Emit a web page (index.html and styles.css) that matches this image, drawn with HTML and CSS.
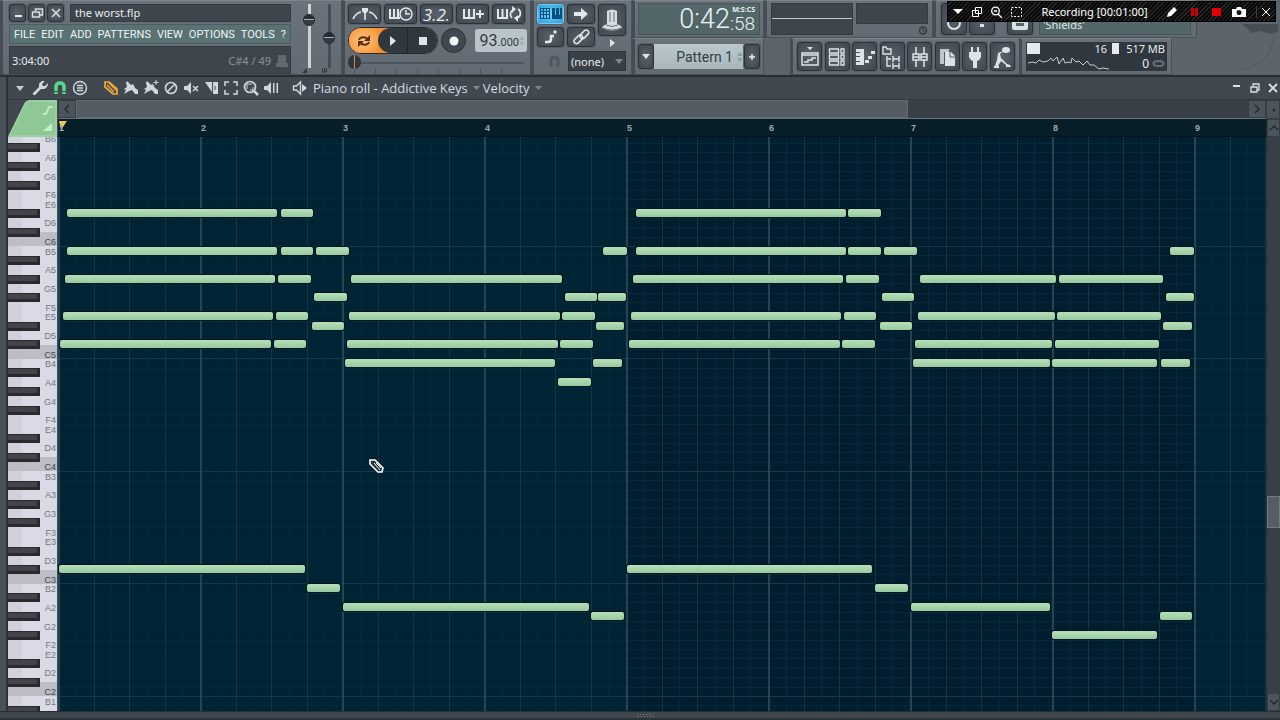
FILE: index.html
```html
<!DOCTYPE html>
<html lang="en">
<head>
<meta charset="utf-8">
<title>the worst.flp</title>
<link rel="stylesheet" href="styles.css">
</head>
<body>
<div class="app">
<header class="toolbar">
  <section class="panel file-panel">
    <div class="file-main">
      <div class="title-row">
        <button class="btn win" aria-label="Minimize"><svg width="16" height="16"><path d="M5 11h7" stroke="#e4ebef" stroke-width="2"/></svg></button>
        <button class="btn win" aria-label="Restore"><svg width="16" height="16" fill="none" stroke="#d5dde2"><path d="M6.500 6V4h7v6H11" stroke-width="1.500"/><path d="M3.500 7h7v5h-7z" stroke-width="1.500"/></svg></button>
        <button class="btn win" aria-label="Close"><svg width="16" height="16"><path d="M4 4l8 8M12 4l-8 8" stroke="#d5dde2" stroke-width="1.700"/></svg></button>
        <div class="sunk file-name">the worst.flp</div>
      </div>
      <nav class="menu">
        <button>FILE</button><button>EDIT</button><button>ADD</button><button>PATTERNS</button><button>VIEW</button><button>OPTIONS</button><button>TOOLS</button><button>?</button>
      </nav>
      <div class="sunk hint"><span>3:04:00</span><span class="hint-note">C#4 / 49</span><svg width="12" height="15" fill="#626a71"><path d="M2 2h8v8h2v4H0v-4h2z"/></svg></div>
    </div>
    <div class="fader"><input class="vol" type="range" value="80" aria-label="Main volume"><svg width="6" height="5"><path d="M0 5L5 0V5z" fill="#30363c"/></svg></div>
    <div class="fader"><input class="pitch" type="range" value="47" aria-label="Main pitch"><svg width="6" height="5"><path d="M.5 0V4h4V0M2.500 0v4" stroke="#30363c" fill="none"/></svg></div>
  </section>

  <section class="panel transport">
    <div class="btn-row">
      <button class="btn mode" aria-label="Metronome"><svg width="28" height="18" fill="none" stroke="#e2e9ed" stroke-width="1.600"><path d="M2 14q3-6 8-7M26 14q-3-6-8-7M14 15V5"/><path d="M11 3h6v3l-3 3-3-3z" fill="#e2e9ed" stroke="none"/></svg></button>
      <button class="btn mode" aria-label="Wait for input"><svg width="28" height="18" fill="none" stroke="#e2e9ed" stroke-width="2"><path d="M3 4v9h10M7 4v9M11 4v9"/><circle cx="19" cy="9" r="6" fill="#4d565e" stroke-width="1.500"/><path d="M19 5v4h4" stroke-width="1.500"/></svg></button>
      <button class="btn mode count" aria-label="Countdown">3.2.</button>
      <button class="btn mode" aria-label="Overdub"><svg width="28" height="18" fill="none" stroke="#e2e9ed" stroke-width="2"><path d="M5 4v9h10V4M10 4v9M17 9h8M21 5v8"/></svg></button>
      <button class="btn mode" aria-label="Loop recording"><svg width="28" height="18" fill="none" stroke="#e2e9ed" stroke-width="2"><path d="M3 4v9h9V4M7.500 4v9"/><path d="M17 13a5 5 0 0 1 1-8M23 4a5 5 0 0 1-1 9" stroke-width="1.700"/><path d="M17 1l4 3-4 4zM23 10l-4 3 4 4z" fill="#e2e9ed" stroke="none"/></svg></button>
    </div>
    <div class="play-row">
      <div class="pill">
        <button class="loop" aria-label="Song mode"><svg width="14" height="14" fill="none" stroke="#602b04" stroke-width="2"><path d="M2 6q1-4 8-2M12 8q-1 4-8 2"/><path d="M13 1v6H7zM1 13V7h6z" fill="#602b04" stroke="none"/></svg></button>
        <button class="play" aria-label="Play"><svg width="10" height="12"><path d="M2 1l6 5-6 5z" fill="#dfe6ea"/></svg></button>
        <button class="stop" aria-label="Stop"><svg width="8" height="8"><path d="M0 0h8v8H0z" fill="#dfe6ea"/></svg></button>
      </div>
      <button class="record" aria-label="Record"><svg width="10" height="10"><circle cx="5" cy="5" r="4.500" fill="#f3f6f8"/></svg></button>
      <label class="tempo"><span>93</span><small>.000</small><svg width="6" height="12" fill="#a2aeb4"><path d="M3 1l3 4H0zM3 11l3-4H0z"/></svg></label>
    </div>
    <input class="position" type="range" value="0" aria-label="Song position">
    <div class="ticks"></div>
  </section>

  <section class="panel record-panel">
    <div class="quad">
      <button class="btn active" aria-label="Typing keyboard"><svg width="24" height="14"><path d="M1 1.500h10M1 4.500h10M1 7.500h10M1 11.500h10M1.500 1v11M4.500 1v11M7.500 1v11M10.500 1v11" stroke="#084e78" fill="none"/><path d="M13 1h3v7h1V1h3v7h1V1h2v11H13z" fill="#084e78"/></svg></button>
      <button class="btn" aria-label="Step mode"><svg width="18" height="14"><path d="M2 5h7V1l7 6-7 6V9H2z" fill="#e2e9ed"/></svg></button>
      <button class="btn" aria-label="Slide"><svg width="18" height="16" fill="none" stroke="#e2e9ed" stroke-width="2.500"><path d="M3 13h3q3 0 3-3V7h3" /><circle cx="13" cy="3" r="1.700" fill="#e2e9ed" stroke="none"/></svg></button>
      <button class="btn" aria-label="Link controllers"><svg width="18" height="16" fill="none" stroke="#e2e9ed" stroke-width="1.500"><rect x="1" y="8" width="10" height="5" rx="2.500" transform="rotate(-45 6 10)"/><rect x="7" y="3" width="10" height="5" rx="2.500" transform="rotate(-45 12 5)"/></svg></button>
    </div>
    <div class="hat-col"><button class="btn hat" aria-label="Help hat"><svg width="22" height="24" fill="#d6dee2"><path d="M6 3q5-3 10 0v13q4 1 5 4-10 5-20 0 1-3 5-4z"/><path d="M9 4v10M13 4v10M5 17q6 3 12 0M2 20q9 4 18 0" stroke="#697179" fill="none"/></svg></button><svg width="6" height="8"><path d="M1 0l5 4-5 4z" fill="#dce3e7"/></svg></div>
    <div class="snap"><svg width="13" height="13" fill="none" stroke="#50585f" stroke-width="3"><path d="M3 12V6q0-4 3.500-4T10 6v6"/></svg><select aria-label="Snap"><option>(none)</option></select><svg class="select-arrow" width="8" height="5"><path d="M0 0h8L4 5z" fill="#7b858d"/></svg></div>
  </section>

  <div class="right-stack">
    <div class="stack-row">
      <section class="panel time-panel"><div class="clock"><span>0:42</span><span class="cs"><small>M:S:CS</small><span>:58</span></span></div></section>
      <section class="panel scope"><div class="wave"></div><div class="scope-right"><div class="sunk spectrum"></div><svg width="10" height="9"><circle cx="5" cy="4.500" r="3.500" fill="none" stroke="#343b42" stroke-width="1.500"/><path d="M5 2v3h3" stroke="#343b42" fill="none"/></svg></div></section>
      <section class="panel online">
        <button class="btn" aria-label="Undo"><svg width="20" height="26"><circle cx="10" cy="19" r="6" fill="none" stroke="#dce3e7" stroke-width="2"/></svg></button>
        <button class="btn" aria-label="Save"><svg width="20" height="26"><path d="M8 20h4v3H8z" fill="#dce3e7"/></svg></button>
        <button class="btn cloud" aria-label="News"><svg width="20" height="26"><path d="M2 16h16v8q0 2-2 2H4q-2 0-2-2z" fill="#d4e2e0"/><path d="M6 19h8v3H6z" fill="#54626a"/></svg></button>
        <div class="news">'Shields'</div>
      </section>
    </div>
    <div class="stack-row">
      <section class="panel pattern-panel">
        <button class="btn" aria-label="Pattern list"><svg width="8" height="5"><path d="M0 0h8L4 5z" fill="#dce3e7"/></svg></button>
        <input class="pattern" value="Pattern 1" aria-label="Pattern name"><svg class="spin" width="6" height="12" fill="#8e9ca4"><path d="M3 1l3 4H0zM3 11l3-4H0z"/></svg>
        <button class="btn" aria-label="Add pattern"><svg width="8" height="8"><path d="M4 1v6M1 4h6" stroke="#edf2f4" stroke-width="1.500"/></svg></button>
      </section>
      <section class="panel views">
        <button class="btn" aria-label="Playlist"><svg width="20" height="24" fill="none" stroke="#dce3e7" stroke-width="1.500"><path d="M7 2h6l-3 3z" fill="#dce3e7" stroke="none"/><path d="M2 8h16v12H2zM2 10h16M4 17h4v-2h4v-2h4"/></svg></button>
        <button class="btn" aria-label="Channel rack"><svg width="20" height="24" fill="none" stroke="#dce3e7" stroke-width="1.300"><path d="M2.500 4h9v4h-9zM2.500 10h9v4h-9zM2.500 16h9v4h-9zM14 4h3v4h-3zM14 10h3v4h-3zM14 16h3v4h-3z"/></svg></button>
        <button class="btn" aria-label="Piano roll"><svg width="20" height="24" fill="#dce3e7"><path d="M1 4h8v16H1v-3h4v-1H1v-4h4v-1H1V8h4V7H1zM10 15h4v3h-4zM13 11h4v3h-4zM16 6h4v3h-4z"/></svg></button>
        <button class="btn" aria-label="Browser"><svg width="20" height="24" fill="none" stroke="#dce3e7" stroke-width="1.400"><path d="M1 2h3l1 2h4v5H1zM5 11v10h4M5 14h4"/><path d="M11 11v6M17 11v6M11 14h6M11 18v6M17 18v6M11 21h6"/></svg></button>
        <button class="btn" aria-label="Mixer"><svg width="20" height="24" fill="none" stroke="#dce3e7" stroke-width="1.500"><path d="M6 2v7M6 15v7M14 2v7M14 15v7M3 9h6v6H3zM11 9h6v6h-6zM3 12h6M11 12h6"/></svg></button>
        <button class="btn" aria-label="Project files"><svg width="20" height="24" fill="#dce3e7"><path d="M3 4h9v3H7v12H3z" opacity=".8"/><path d="M8 7h6l4 4v10H8z"/><path d="M13 7v5h5" fill="none" stroke="#566069"/></svg></button>
        <button class="btn" aria-label="Plugin picker"><svg width="20" height="24" fill="#dce3e7"><path d="M6 2h2v5h4V2h2v5h2v5q-1 3-4 4v7H8v-7q-3-1-4-4V7h2z"/></svg></button>
        <button class="btn" aria-label="Tempo tapper"><svg width="20" height="24" fill="#dce3e7"><ellipse cx="14" cy="5" rx="4" ry="3"/><path d="M12 6L6 8 5 15l-2 6h3l3-5 5 4v2h5l-1-2-3-1-6-6-1-4 5-4z"/><path d="M2 21h5v2H2z"/></svg></button>
      </section>
      <section class="panel cpu-panel">
        <div class="cpu"><i class="load"></i><span>16</span><i class="mem"></i><span>517 MB</span>
          <svg class="graph" width="82" height="16" viewBox="0 0 82 16" fill="none" stroke="#c7ced3"><path d="M1 8l4-1 4 1 3-3 4 2 5-1 3-3 2 3 4-4 2 7 4-6 2 5 4-1 2 1 1-5 4 4 3-1 4 4 4-4 3 4 4 0 5 4 4-1 5 1 4 0 5-1"/></svg>
          <span class="voices">0</span><svg class="ring" width="13" height="7"><ellipse cx="6.500" cy="3.500" rx="5" ry="2.500" fill="none" stroke="#68727b" stroke-width="2"/></svg></div>
      </section>
      <svg class="emblem" width="46" height="50" viewBox="0 0 46 50"><path d="M10 0H46V8L38 10 28 7 20 9Z" fill="#464e56"/><path d="M42 8Q42 38 10 46" stroke="#50585f" fill="none"/></svg>
    </div>
  </div>
</header>

<div class="recorder">
  <button aria-label="Recorder menu"><svg width="12" height="12"><path d="M1 3h10L6 8z" fill="#fff"/></svg></button>
  <button aria-label="Windows"><svg width="12" height="12" fill="none" stroke="#fff"><path d="M4.500 1.500h6v6h-6zM1.500 4.500h6v6h-6z"/></svg></button>
  <button aria-label="Zoom"><svg width="13" height="12" fill="none" stroke="#fff" stroke-width="1.300"><circle cx="5.500" cy="5" r="3.800"/><path d="M8 8l4 4M4 5h3"/></svg></button>
  <button aria-label="Region"><svg width="13" height="12" fill="none" stroke="#fff"><path d="M1.500 1.500h10v9h-10z" stroke-dasharray="2 1.500"/></svg></button>
  <span class="rec-text">Recording [00:01:00]</span>
  <button aria-label="Draw"><svg width="13" height="12" fill="#fff"><path d="M1 11l1-4 6-6 3 3-6 6zM9 0l3 3"/></svg></button>
  <button class="pause" aria-label="Pause"><svg width="12" height="12" fill="#c90000"><path d="M3 2h3v8H3zM7 2h3v8H7z"/></svg></button>
  <button aria-label="Stop recording"><svg width="12" height="12"><path d="M2 2h9v8H2z" fill="#e00000"/></svg></button>
  <button aria-label="Take picture"><svg width="14" height="12" fill="#fff"><path fill-rule="evenodd" d="M0 3h4l1-2h4l1 2h4v8H0zM7 4a2.500 2.500 0 100 5 2.500 2.500 0 000-5"/></svg></button>
  <button class="rec-close" aria-label="Close recorder"><svg width="10" height="12"><path d="M1 2l8 8M9 2l-8 8" stroke="#fff"/></svg></button>
</div>

<main class="roll">
  <div class="roll-head">
    <button aria-label="Menu"><svg width="16" height="16"><path d="M4 6h8l-4 5z" fill="#c5ccd0"/></svg></button>
    <button aria-label="Tools"><svg width="16" height="16"><path d="M1 13l6-6q-1-4 3-6l3 0-3 3 1 2 2 0 3-3q0 5-4 6l-3 0-6 6q-3 0-2-2z" fill="#d0d7db"/></svg></button>
    <button aria-label="Snap"><svg width="16" height="16" fill="none" stroke="#55d98b" stroke-width="3.500"><path d="M4 14V7q0-4 4-4t4 4v7"/><path d="M2 11.500h4M10 11.500h4" stroke="#414850" stroke-width="1"/></svg></button>
    <button aria-label="Options"><svg width="16" height="16" fill="none" stroke="#d0d7db" stroke-width="1.400"><circle cx="8" cy="8" r="6.500"/><path d="M5 5.500h6M5 8h6M5 10.500h6"/></svg></button>
    <button class="first-tool" aria-label="Draw"><svg width="16" height="16" fill="none" stroke="#f0aa36" stroke-width="1.700"><path d="M2 2h4l8 7v5h-4L2 7z"/><path d="M4 5l7 7M6 3l7 7" stroke-width="1.400"/></svg></button>
    <button aria-label="Paint"><svg width="16" height="16" fill="#d0d7db"><path d="M4 1l4 4 2-1 2 4 3 2v4h-3l-3-4-3 1-5 3 2-4-2-1 3-2-1-4z"/></svg></button>
    <button aria-label="Paint sequence"><svg width="16" height="16" fill="#d0d7db"><path d="M4 1l4 4 2-1 2 4 3 2v4h-3l-3-4-3 1-5 3 2-4-2-1 3-2-1-4z"/><path d="M13 0v5M10.500 2.500h5" stroke="#d0d7db"/></svg></button>
    <button aria-label="Delete"><svg width="16" height="16" fill="none" stroke="#d0d7db" stroke-width="1.700"><circle cx="8" cy="8" r="5.500"/><path d="M4 12l8-8"/></svg></button>
    <button aria-label="Mute"><svg width="16" height="16" fill="#d0d7db"><path d="M1 6h3l4-4v12l-4-4H1z"/><path d="M10 6l5 5M15 6l-5 5" stroke="#d0d7db" stroke-width="1.500"/></svg></button>
    <button aria-label="Slice"><svg width="16" height="16" fill="#d0d7db"><path d="M2 2h7v10zM10 2h5v12h-5z"/><path d="M12 6v4" stroke="#414850"/></svg></button>
    <button aria-label="Select"><svg width="16" height="16" fill="none" stroke="#d0d7db" stroke-width="1.600"><path d="M2 6V2h4M10 2h4v4M14 10v4h-4M6 14H2v-4"/></svg></button>
    <button aria-label="Zoom"><svg width="16" height="16" fill="none" stroke="#d0d7db" stroke-width="1.700"><circle cx="7" cy="7" r="5.500"/><path d="M11 11l4 4" stroke-width="2.500"/><path d="M4 9V4h5M10 7v3H7" stroke-width="1"/></svg></button>
    <button aria-label="Playback"><svg width="16" height="16" fill="#d0d7db"><path d="M1 6h3l4-4v12l-4-4H1zM10 3h1.500v10H10zM13.500 3H15v10h-1.500z"/></svg></button>
    <button class="channel" aria-label="Preview"><svg width="16" height="16"><path d="M1.500 6h3l4-4v12l-4-4h-3z" fill="none" stroke="#d0d7db" stroke-width="1.400"/><path d="M10 4l5 4-5 4z" fill="#d0d7db"/></svg></button>
    <button class="head-text">Piano roll - Addictive Keys <svg width="7" height="4"><path d="M0 0h7L3.500 4z" fill="#7f898f"/></svg></button>
    <button class="head-text">Velocity <svg width="7" height="4"><path d="M0 0h7L3.500 4z" fill="#7f898f"/></svg></button>
    <div class="head-end">
      <button aria-label="Minimize"><svg width="12" height="12"><path d="M2 4h7" stroke="#dce3e7" stroke-width="2"/></svg></button>
      <button aria-label="Restore"><svg width="12" height="12" fill="none" stroke="#dce3e7" stroke-width="1.300"><path d="M4 4V2h6v6H8M2 5h6v5H2z"/></svg></button>
      <button aria-label="Close"><svg width="12" height="12"><path d="M2 2l8 8M10 2l-8 8" stroke="#dce3e7" stroke-width="1.800"/></svg></button>
    </div>
  </div>
  <div class="roll-body">
    <div class="corner"><svg viewBox="0 0 50 37" width="50" height="37"><path d="M0 37L16 4Q18 0 22 0H49V37z" fill="#8fc796"/><path d="M1 36L17 4Q18 1 22 1H48V36z" fill="none" stroke="#a9d9ae"/><path d="M35 14h3l3-7h4" stroke="#c4e9c5" stroke-width="2" fill="none"/><path d="M35 31l9-8v8z" fill="#c4efc4"/></svg></div>
    <div class="hscroll"><button aria-label="Scroll left"><svg width="8" height="10"><path d="M6 1L2 5l4 4" fill="none" stroke="#242b31" stroke-width="1.500"/></svg></button><div class="htrack"><div class="hthumb"></div></div><button aria-label="Scroll right"><svg width="8" height="10"><path d="M2 1l4 4-4 4" fill="none" stroke="#242b31" stroke-width="1.500"/></svg></button></div>
    <button class="vtop" aria-label="Zoom out"><svg width="8" height="8"><circle cx="5" cy="4" r="1.500" fill="#22292f"/></svg></button>
    <div class="ruler" id="ruler"></div>
    <svg class="keys" id="keys"></svg>
    <svg class="grid" id="grid"><defs><linearGradient id="note-fill" x2="0" y2="1"><stop stop-color="#b6dfba"/><stop offset="1" stop-color="#96c9a0"/></linearGradient></defs></svg>
    <div class="vscroll"><button aria-label="Scroll up"><svg width="10" height="7"><path d="M1 5l4-4 4 4" fill="none" stroke="#22292f" stroke-width="1.500"/></svg></button><div class="vtrack"><div class="above"></div><div class="vthumb"></div><div class="below"></div></div><button aria-label="Scroll down"><svg width="10" height="7"><path d="M1 1l4 4 4-4" fill="none" stroke="#22292f" stroke-width="1.500"/></svg></button></div>
  </div>
  <div class="grip"><svg width="18" height="5" stroke="#798188" stroke-dasharray="1 2"><path d="M0 1.500h18M1 3.500h17"/></svg></div>
</main>
</div>
<script src="roll.js"></script>
</body>
</html>
```
FILE: styles.css
```css
* { box-sizing: border-box; }
body { margin: 0; background: #343b42; font-family: "Noto Sans", "Open Sans", sans-serif; font-size: 11px; color: #e6ecef; }
button, input, select { font: inherit; color: inherit; margin: 0; padding: 0; border: 0; background: none; border-radius: 0; }
button { display: flex; align-items: center; justify-content: center; flex: none; }
svg { display: block; flex: none; }
.app { display: flex; flex-direction: column; height: 100vh; min-height: 480px; overflow: hidden; position: relative; }

.toolbar { display: flex; height: 77px; flex: none; background: #5c646c; border-bottom: 2px solid #272e35; overflow: hidden; }
.panel { display: flex; background: linear-gradient(#6a737b, #626b73); border-left: 3px solid #454c54; border-right: 1px solid #4a5159; border-bottom: 1px solid #4b5259; border-top: 1px solid #7b848b; }
.btn { background: radial-gradient(#59626b, #3f474f); border: 1px solid #2b3239; border-radius: 3px; box-shadow: 0 0 0 1px #58616a; }
.sunk { background: #3e454d; border: 1px solid #343b42; }

.file-panel { width: 342px; padding: 3px 0 0 6px; flex: none; gap: 6px; }
.file-main { display: flex; flex-direction: column; gap: 2px; width: 282px; margin-right: 5px; }
.title-row { display: flex; gap: 2px; height: 18px; }
.win { width: 17px; height: 18px; }
.file-name { flex: 1; margin-left: 4px; padding-left: 4px; line-height: 15px; }
.menu { display: flex; justify-content: space-between; height: 20px; background: #5a7274; border: 1px solid #4b5d62; padding: 0 4px; font-family: Roboto, sans-serif; font-size: 11px; color: #edf6f5; }
.hint { height: 28px; display: flex; align-items: center; padding: 0 2px; }
.hint-note { margin-left: auto; margin-right: 5px; color: #8b949a; }
.fader { display: flex; width: 14px; flex-direction: column; justify-content: flex-end; height: 69px; }
.fader input { appearance: none; writing-mode: vertical-lr; direction: rtl; width: 14px; height: 64px; background: linear-gradient(90deg, transparent 6px, #454d55 6px, #454d55 9px, transparent 9px); }
.fader .vol { background: linear-gradient(90deg, transparent 6px, #cdd3d7 6px, #cdd3d7 9px, transparent 9px); }
.fader input::-webkit-slider-thumb { appearance: none; width: 12px; height: 12px; border-radius: 50%; background: linear-gradient(#262c31 45%, #aab2b7 45%, #aab2b7 55%, #343b41 55%); border: 1px solid #23292e; }

.transport { width: 189px; padding: 3px 0 0 3px; flex: none; flex-direction: column; }
.btn-row { display: flex; gap: 3px; }
.mode { width: 33px; height: 20px; }
.count { font: italic 17px "Open Sans", sans-serif; }
.play-row { display: flex; align-items: center; height: 29px; margin-top: 3px; gap: 3px; }
.pill { display: flex; height: 27px; border-radius: 13px; overflow: hidden; background: #f59130; border: 1px solid #252b31; width: 90px; }
.pill button { flex: 1; background: #30373d; }
.pill .loop { background: radial-gradient(#ffc77f, #f59130); }
.pill .play { border-radius: 13px 0 0 13px; border-right: 1px solid #20262b; }
.record { width: 25px; height: 25px; border-radius: 50%; background: #414950; border: 1px solid #2a3036; }
.tempo { display: flex; align-items: baseline; justify-content: flex-end; margin-left: 6px; width: 52px; height: 23px; padding-right: 2px; border-radius: 3px; background: #b9c5cb; color: #343b40; font: 16px/23px Roboto, sans-serif; }
.tempo small { font-size: 11px; }
.tempo svg { align-self: center; }
.position { appearance: none; width: 176px; height: 15px; background: linear-gradient(transparent 7px, #4e565d 7px, #4e565d 9px, transparent 9px); }
.position::-webkit-slider-thumb { appearance: none; width: 13px; height: 14px; border-radius: 7px 7px 50% 50%; background: linear-gradient(90deg, #30363b 45%, #c78b4a 45%, #c78b4a 55%, #30363b 55%); }
.ticks { height: 5px; margin: 0 9px 0 6px; background: repeating-linear-gradient(90deg, #4b535a 0 1px, transparent 1px 21px); }

.record-panel { width: 101px; padding: 3px 0 0 3px; flex: none; flex-wrap: wrap; align-content: flex-start; column-gap: 3px; }
.quad { display: grid; grid-template-columns: 27px 28px; gap: 3px; }
.quad .btn { height: 20px; }
.quad .active { background: radial-gradient(#7bd6ff, #249ee0); border-color: #76caf1; }
.hat-col { display: flex; flex-direction: column; align-items: center; gap: 3px; }
.hat { width: 28px; height: 32px; }
.snap { display: flex; align-items: center; justify-content: flex-end; gap: 7px; width: 89px; height: 24px; margin-top: 2px; position: relative; }
.snap select { appearance: none; width: 58px; height: 20px; background: #394047; border: 1px solid #2c3339; padding-left: 2px; }
.select-arrow { position: absolute; right: 3px; top: 10px; }

.right-stack { flex: 1; min-width: 0; display: grid; grid-template-rows: 38px 37px; }
.stack-row { display: flex; min-height: 0; }
.time-panel { width: 132px; padding: 2px 3px; flex: none; }
.clock { flex: 1; display: flex; justify-content: flex-end; align-items: flex-end; background: #53676a; border: 1px solid #455559; padding-right: 4px; font: 27px/30px Roboto, sans-serif; font-weight: 300; color: #eaf4f3; }
.clock .cs { display: flex; flex-direction: column; font-size: 19px; line-height: 20px; }
.clock small { font: bold 7px/9px "Open Sans", sans-serif; align-self: flex-end; }
.scope { width: 169px; padding: 2px 4px; flex: none; gap: 3px; }
.wave { width: 82px; border: 1px solid #343b42; background: linear-gradient(#3e454d 14px, #c3cbd1 14px, #c3cbd1 15px, #3e454d 15px); }
.scope-right { flex: 1; display: flex; flex-direction: column; align-items: flex-end; gap: 2px; }
.spectrum { width: 100%; height: 21px; }
.online { width: 264px; flex: none; padding: 2px 5px; gap: 2px; }
.online .btn { width: 26px; align-items: flex-start; }
.online .cloud { margin-left: 10px; }
.news { flex: 1; margin-left: 4px; background: #53676a; border: 1px solid #465559; padding: 12px 0 0 3px; line-height: 18px; color: #d9ece8; }
.pattern-panel { width: 132px; padding: 5px 3px; flex: none; position: relative; }
.pattern-panel .btn { width: 16px; }
.pattern { flex: 1; min-width: 0; background: linear-gradient(#b9c8cd, #a9b7bd); color: #343d42; text-align: right; padding-right: 11px; font: 14px Roboto, sans-serif; }
.spin { position: absolute; right: 20px; top: 12px; }
.views { width: 229px; margin-left: 26px; padding: 3px 4px; flex: none; justify-content: space-between; border-right: 0; }
.views .btn { width: 25px; height: 29px; }
.cpu-panel { width: 153px; padding: 3px 4px; flex: none; }
.cpu { flex: 1; background: #30373e; display: grid; grid-template-columns: 13px 67px 10px 1fr; grid-template-rows: 13px 16px; position: relative; text-align: right; line-height: 14px; padding: 0 2px 0 1px; }
.cpu i { background: #e5e9f1; height: 11px; margin-top: 1px; }
.cpu .mem { width: 7px; margin-left: 5px; }
.graph { grid-column: 1 / 4; }
.voices { font-size: 12px; line-height: 17px; padding-right: 16px; }
.ring { position: absolute; right: 2px; bottom: 4px; }
.emblem { margin: -14px 2px 0 auto; }

.recorder { position: absolute; top: 1px; right: 4px; width: 329px; height: 21px; display: flex; align-items: center; padding: 0 4px; gap: 7px; background: repeating-linear-gradient(135deg, #090909 0 2px, #272727 2px 3px); border: 1px solid #000; color: #fff; }
.rec-text { flex: 1; text-align: center; line-height: 18px; white-space: nowrap; }
.recorder .pause { margin-left: 2px; }
.recorder .pause ~ button { margin-left: 3px; }
.rec-close { border-left: 1px solid #3d3d3d; padding-left: 4px; }

.roll { flex: 1; min-height: 0; display: flex; flex-direction: column; padding-left: 8px; background: linear-gradient(90deg, #4a5159 0 6px, #2b3238 6px 8px, #414850 8px); }
.roll-head { display: flex; align-items: center; height: 23px; flex: none; background: #414850; padding-left: 2px; border-bottom: 1px solid #32393f; }
.roll-head button { width: 20px; height: 20px; }
.roll-head .first-tool { margin-left: 11px; }
.roll-head .channel { margin-left: 9px; }
.roll-head .head-text { width: auto; gap: 5px; margin-left: 3px; font: 13px "Open Sans", sans-serif; color: #d5dce0; }
.head-end { display: flex; margin-left: auto; margin-right: -2px; }
.head-end button { width: 18px; }
.roll-body { flex: 1; min-height: 0; display: grid; grid-template-columns: 50px 1fr 14px; grid-template-rows: 19px 18px 1fr; }
.corner { grid-row: 1 / 3; }
.hscroll { display: flex; min-width: 0; background: #393f47; border-bottom: 1px solid #64767b; }
.hscroll button { width: 18px; background: #4c545c; border: 1px solid #363d43; }
.htrack { flex: 1; display: flex; }
.hthumb { width: 71%; background: #555c64; border: 1px solid #626a71; }
.vtop { background: #4c545c; border: 1px solid #363d43; }
.ruler { grid-column: 2; display: flex; min-width: 0; overflow: hidden; background: #071d28; padding-left: 1px; border-bottom: 1px solid #02141e; font: bold 9px/19px "Liberation Sans", sans-serif; color: #9aa9b0; }
.ruler span { width: 142px; flex: none; }
.ruler svg { flex: none; margin: 2px -9px 0 0; }
.keys { grid-column: 1; grid-row: 3; width: 50px; height: 100%; background: #d9dae5; font: 9px "Liberation Sans", sans-serif; }
.grid { grid-column: 2; grid-row: 3; width: 100%; height: 100%; background: #002434; }
.vscroll { grid-column: 3; grid-row: 2 / 4; display: flex; flex-direction: column; background: #393f47; border-left: 1px solid #252c32; }
.vscroll button { height: 18px; background: #4c545c; border: 1px solid #363d43; }
.vtrack { flex: 1; display: flex; flex-direction: column; }
.above { flex: 360; }
.vthumb { flex: 30; background: #555c64; border: 1px solid #737a81; }
.below { flex: 166; }
.grip { height: 9px; flex: none; display: flex; justify-content: center; align-items: center; background: #3e454d; border-bottom: 2px solid #2b3238; border-top: 1px solid #272e34; margin-left: -8px; padding-left: 12px; }
```
FILE: roll.js
```js
const NS = "http://www.w3.org/2000/svg";
const BAR = 142, ROW = 9.375, B5 = 113.6, BLACK = [1, 3, 5, 8, 10];
const grid = document.getElementById("grid");
const keys = document.getElementById("keys");
const ruler = document.getElementById("ruler");

function add(parent, tag, attrs, text) {
  const el = document.createElementNS(NS, tag);
  for (const name in attrs) el.setAttribute(name, attrs[name]);
  if (text) el.textContent = text;
  parent.append(el);
  return el;
}
const rowY = k => B5 + k * ROW;

// Ruler
for (let bar = 1; bar <= 9; bar++) {
  const label = document.createElement("span");
  label.textContent = bar;
  ruler.append(label);
}
const marker = document.createElementNS(NS, "svg");
marker.setAttribute("width", 9);
marker.setAttribute("height", 10);
add(marker, "path", { d: "M0 0h8L2 9z", fill: "#f1c45d" });
ruler.prepend(marker);

// Grid lines
add(grid, "rect", { x: 569, y: 0, width: 568, height: "100%", fill: "#001e2d" });
for (let k = -13; k < 70; k++) {
  const octave = ((k % 12) + 12) % 12 === 0;
  add(grid, "rect", { x: 0, y: Math.round(rowY(k) - ROW / 2), width: "100%", height: 1, fill: octave ? "#16394a" : "#042938" });
}
for (let i = 0; i < 90; i++) {
  const color = i % 8 === 0 ? "#2c4f5d" : i % 2 === 0 ? "#143645" : "#052938";
  add(grid, "rect", { x: Math.round(i * BAR / 8), y: 0, width: i % 8 === 0 ? 2 : 1, height: "100%", fill: color, opacity: i % 8 === 0 ? .8 : 1 });
}

// Keyboard: k counts semitones down from B5
const NAMES = { 0: "B", 2: "A", 4: "G", 6: "F", 7: "E", 9: "D", 11: "C" };
add(keys, "rect", { x: 0, y: 0, width: 14, height: "100%", fill: "#c5c6ce", opacity: .45 });
for (let k = -12; k < 61; k++) {
  const step = ((k % 12) + 12) % 12;
  const y = Math.round(rowY(k));
  if (step === 11) add(keys, "rect", { x: 0, y: y - 9, width: 49, height: 14, fill: "#bcbdc7" });
  if (NAMES[step]) add(keys, "text", { x: 48, y: y + 4, "text-anchor": "end", fill: step === 11 ? "#444650" : "#747682" }, NAMES[step] + (5 - Math.floor(k / 12)));
}
for (let k = -12; k < 63; k++) {
  if (!BLACK.includes(((k % 12) + 12) % 12)) continue;
  const y = Math.round(rowY(k));
  add(keys, "rect", { x: 0, y: y - 4, width: 32, height: 9, fill: "#292a2f" });
  add(keys, "rect", { x: 0, y: y - 3, width: 29, height: 5, fill: "#43444a" });
}
add(keys, "rect", { x: 49, y: 0, width: 1, height: "100%", fill: "#315054" });

// Notes: row, then start and end pairs in pixels from the first bar line
const notes = [
  [-4, 9, 219, 223, 255, 578, 788, 790, 823],
  [0, 9, 219, 223, 255, 258, 291, 545, 569, 578, 788, 790, 823, 826, 859, 1112, 1136],
  [3, 7, 217, 220, 253, 293, 504, 575, 785, 788, 821, 862, 998, 1001, 1105],
  [5, 256, 289, 507, 539, 540, 568, 824, 856, 1108, 1136],
  [7, 5, 215, 218, 250, 291, 502, 504, 537, 573, 783, 786, 818, 860, 997, 999, 1103],
  [8, 254, 286, 538, 566, 822, 854, 1105, 1134],
  [10, 2, 213, 216, 248, 289, 500, 502, 535, 571, 782, 784, 817, 857, 994, 997, 1101],
  [12, 287, 497, 535, 564, 855, 992, 994, 1099, 1103, 1132],
  [14, 500, 533],
  [34, 1, 247, 569, 814],
  [36, 249, 282, 817, 850],
  [38, 285, 531, 853, 992],
  [39, 533, 566, 1102, 1134],
  [41, 994, 1099]
];
for (const [k, ...times] of notes) {
  const y = Math.round(rowY(k)) - 4;
  for (let i = 0; i < times.length; i += 2) {
    const x = times[i], width = times[i + 1] - x;
    add(grid, "rect", { x: x - 1, y: y - 1, width: width + 2, height: 10, rx: 2, fill: "#001722" });
    add(grid, "rect", { x, y, width, height: 8, rx: 2, fill: "url(#note-fill)" });
  }
}

// Pencil pointer
const pencil = add(grid, "g", { transform: "translate(311 322)" });
add(pencil, "path", { d: "M1 1l5 0 8 8-1 4-4 0-8-8z", fill: "#223039", stroke: "#fff", "stroke-width": 1.6 });
add(pencil, "path", { d: "M5 4l6 7M7 4l5 5", stroke: "#fff" });
```
